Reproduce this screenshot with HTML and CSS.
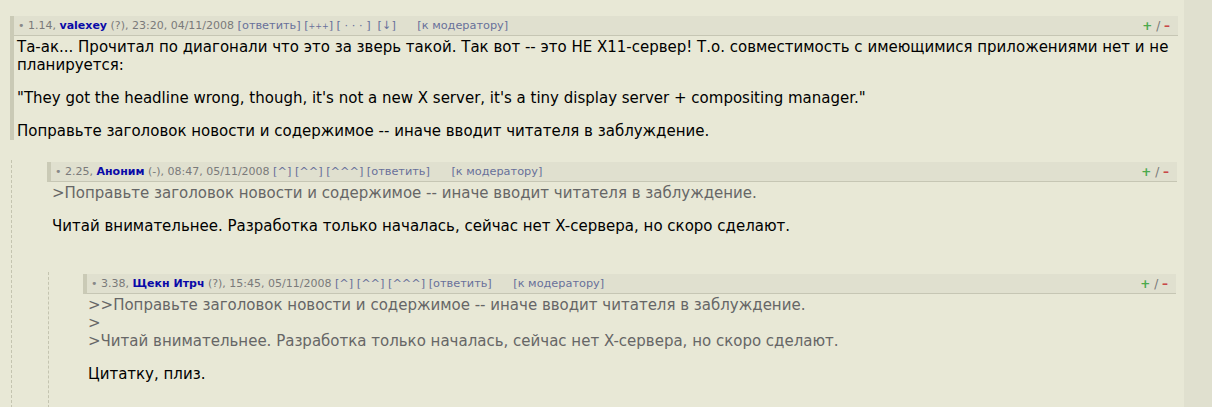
FILE: index.html
```html
<!DOCTYPE html>
<html lang="ru">
<head>
<meta charset="utf-8">
<title>Комментарии</title>
<link rel="stylesheet" href="styles.css">
</head>
<body>
<div class="page">
  <div class="main">
    <div class="comment root">
      <div class="hdr">
        <div class="meta">
          <span class="dot">•</span> 1.14, <b class="user">valexey</b> (?), 23:20, 04/11/2008 <span class="lnk">[ответить]</span> <span class="lnk">[<small>+++</small>]</span> <span class="lnk">[ · · · ]</span>&nbsp; <span class="lnk">[↓]</span> <span class="lnk mod">[к модератору]</span>
        </div>
        <div class="vote"><span class="plus">+</span> / <span class="minus">–</span></div>
      </div>
      <div class="body">
        <p>Та-ак... Прочитал по диагонали что это за зверь такой. Так вот -- это НЕ X11-сервер! Т.о. совместимость с имеющимися приложениями нет и не планируется:</p>
        <p>"They got the headline wrong, though, it's not a new X server, it's a tiny display server + compositing manager."</p>
        <p>Поправьте заголовок новости и содержимое -- иначе вводит читателя в заблуждение.</p>
      </div>
    </div>
    <div class="replies">
      <div class="comment">
        <div class="hdr">
          <div class="meta">
            <span class="dot">•</span> 2.25, <b class="user">Аноним</b> (-), 08:47, 05/11/2008 <span class="lnk">[^]</span> <span class="lnk">[^^]</span> <span class="lnk">[^^^]</span> <span class="lnk">[ответить]</span> <span class="lnk mod">[к модератору]</span>
          </div>
          <div class="vote"><span class="plus">+</span> / <span class="minus">–</span></div>
        </div>
        <div class="body">
          <p class="quote">&gt;Поправьте заголовок новости и содержимое -- иначе вводит читателя в заблуждение.</p>
          <p>Читай внимательнее. Разработка только началась, сейчас нет X-сервера, но скоро сделают.</p>
        </div>
      </div>
      <div class="replies">
        <div class="comment">
          <div class="hdr">
            <div class="meta">
              <span class="dot">•</span> 3.38, <b class="user">Щекн Итрч</b> (?), 15:45, 05/11/2008 <span class="lnk">[^]</span> <span class="lnk">[^^]</span> <span class="lnk">[^^^]</span> <span class="lnk">[ответить]</span> <span class="lnk mod">[к модератору]</span>
            </div>
            <div class="vote"><span class="plus">+</span> / <span class="minus">–</span></div>
          </div>
          <div class="body">
            <p class="quote">&gt;&gt;Поправьте заголовок новости и содержимое -- иначе вводит читателя в заблуждение.<br>&gt;<br>&gt;Читай внимательнее. Разработка только началась, сейчас нет X-сервера, но скоро сделают.</p>
            <p>Цитатку, плиз.</p>
          </div>
        </div>
      </div>
    </div>
  </div>
  <div class="side"></div>
</div>
</body>
</html>
```

FILE: styles.css
```css
html, body {
  margin: 0;
  padding: 0;
  height: 100%;
}
body {
  background: #e8e8d6;
  font-family: "DejaVu Sans", sans-serif;
  color: #000;
  overflow: hidden;
}
.page {
  display: flex;
  min-height: 100%;
}
.main {
  flex: 1;
  padding: 16px 6px 0 10px;
}
.side {
  width: 28px;
  background: #e0e0cf;
}
.comment {
  display: flex;
  flex-direction: column;
}
.comment.root {
  border-left: 4px solid #cacab6;
}
.hdr {
  display: flex;
  align-items: center;
  justify-content: space-between;
  background: #e0e0cf;
  border-bottom: 1px solid #c6c6b4;
  padding: 3px 8px 3px 4px;
  height: 13px;
  font-size: 11px;
  color: #7a7a7a;
  white-space: nowrap;
}
.comment:not(.root) .hdr {
  border-left: 4px solid #cacab6;
}
.dot {
  color: #888;
}
.user {
  color: #0a0aa8;
  font-weight: bold;
}
.lnk {
  color: #68709a;
  font-size: 11.3px;
}
.lnk small {
  font-size: 8px;
}
.mod {
  margin-left: 18px;
}
.vote {
  font-size: 12px;
  color: #777;
}
.plus {
  color: #4caa4c;
  font-weight: bold;
}
.minus {
  color: #c84848;
  font-weight: bold;
}
.body {
  padding: 2px 0 0 3px;
  font-size: 15px;
}
.comment:not(.root) .body {
  padding: 2px 0 17px 5px;
}
.body p {
  margin: 15px 0 0;
}
.body p:first-child {
  margin-top: 0;
}
.quote {
  color: #666;
}
.replies {
  margin: 20px 0 0 1px;
  padding: 2px 1px 0 35px;
  border-left: 1px dashed #c4c4b0;
}
.replies .replies {
  margin-top: 20px;
  padding-left: 34px;
  padding-bottom: 8px;
}
```
